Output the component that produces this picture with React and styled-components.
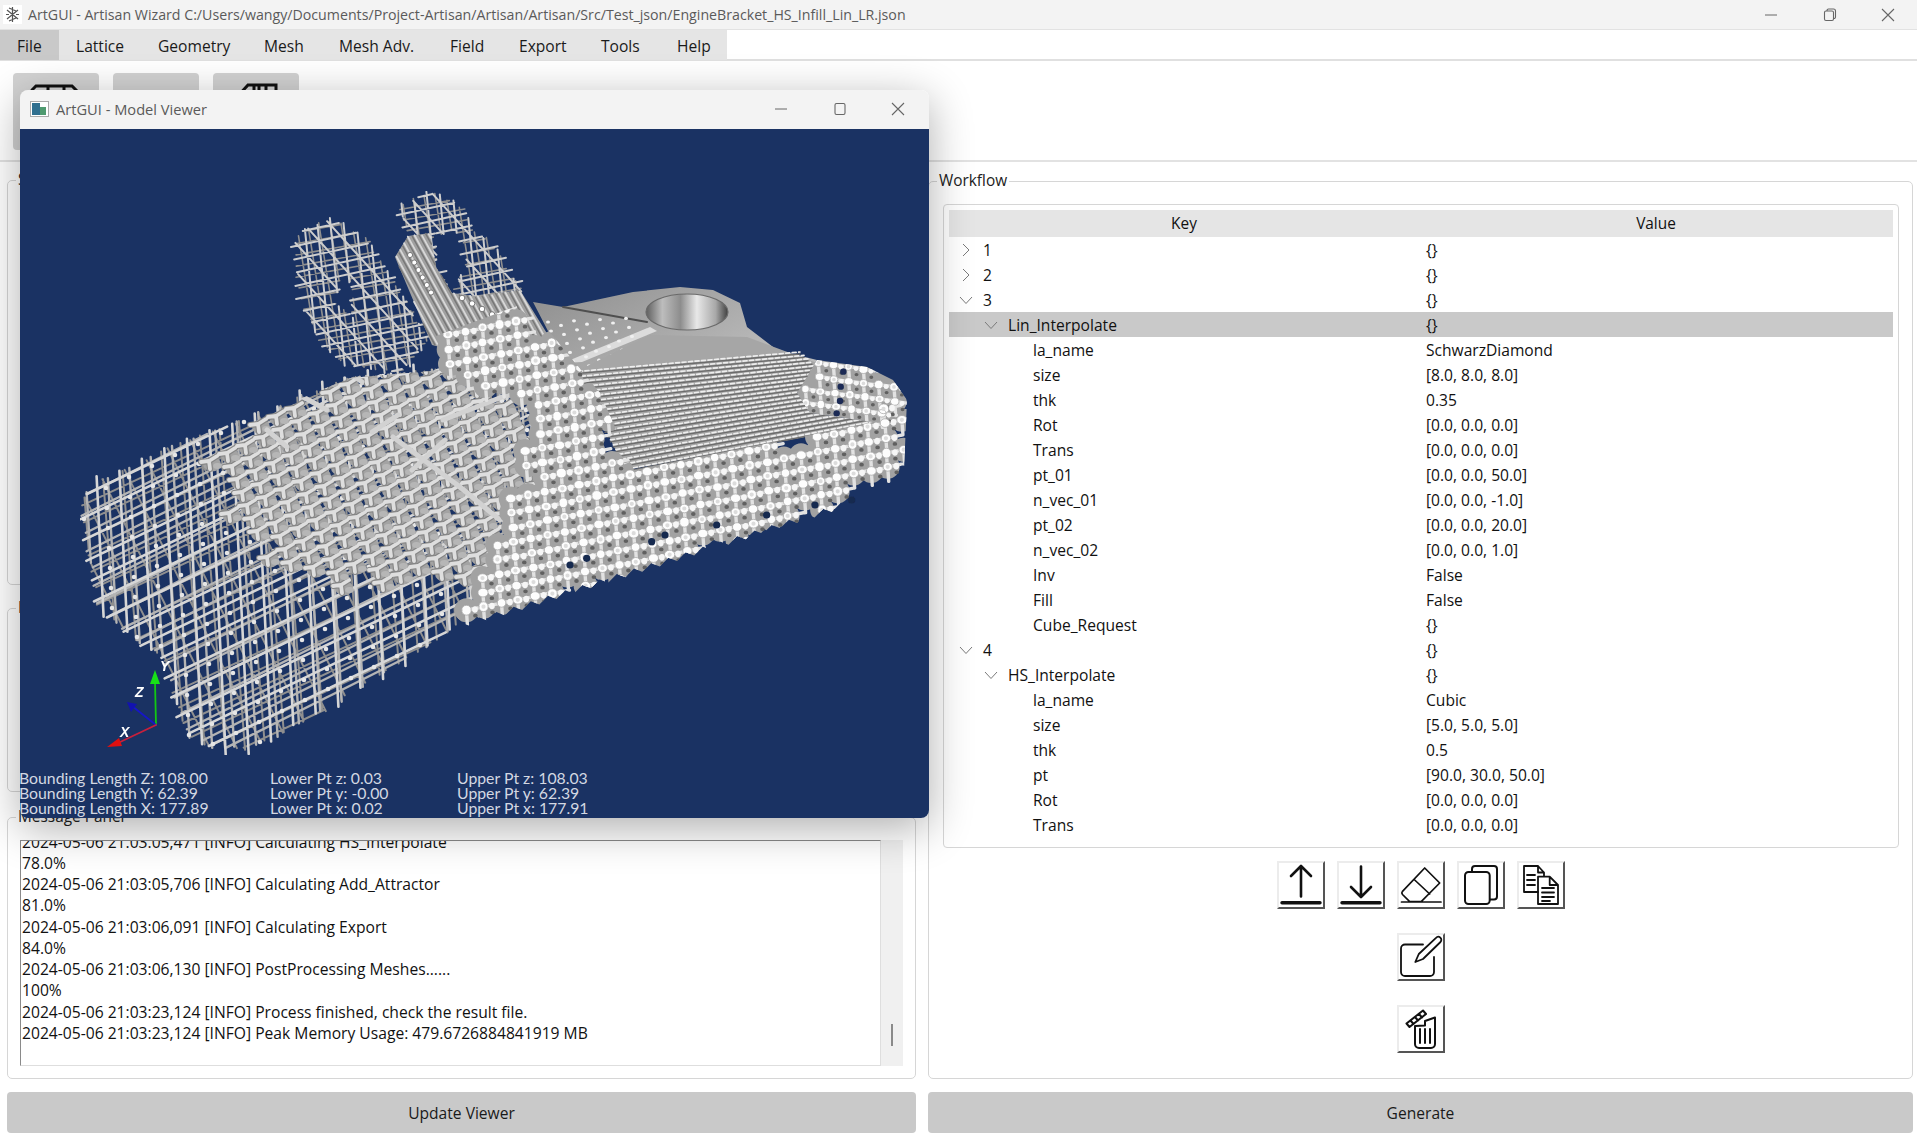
import React from "react";
import styled, { createGlobalStyle } from "styled-components";

const GlobalStyle = createGlobalStyle`
  html, body { margin: 0; padding: 0; background: #fff; overflow: hidden; }
  body { font-family: "Open Sans", "Noto Sans", "Liberation Sans", sans-serif; color: #111; }
  * { box-sizing: border-box; }
`;

const Page = styled.div`
  position: relative;
  width: 1917px;
  height: 1136px;
  display: flex;
  flex-direction: column;
  background: #fff;
  overflow: hidden;
`;

const TitleBar = styled.div`
  height: 30px;
  flex: none;
  display: flex;
  align-items: center;
  background: #f3f3f3;
  border-bottom: 1px solid #e2e2e2;
  padding-left: 3px;
  color: #5a5a5a;
  font-size: 14.2px;
`;

const AppIcon = styled.span`
  width: 19px;
  height: 19px;
  margin-right: 6px;
  background: #fff;
  display: flex;
  align-items: center;
  justify-content: center;
`;

const TitleText = styled.span`
  flex: 1;
  white-space: nowrap;
`;

const WinControls = styled.div`
  display: flex;
  align-items: center;
  width: ${(p) => p.$width}px;
  justify-content: space-between;
  margin-right: ${(p) => p.$right}px;
`;

const MenuRow = styled.div`
  height: 31px;
  flex: none;
  border-bottom: 2px solid #e0e0e0;
  display: flex;
`;

const MenuList = styled.div`
  display: flex;
  background: #e5e5e5;
  width: 727px;
  height: 30px;
`;

const MenuItem = styled.div`
  width: ${(p) => p.$w}px;
  padding: 1px 0 0 17px;
  display: flex;
  align-items: center;
  background: ${(p) => (p.$active ? "#c9c9c9" : "transparent")};
  font-size: 15.6px;
  color: #1a1a1a;
`;

const Toolbar = styled.div`
  height: 101px;
  flex: none;
  border-bottom: 2px solid #e2e2e2;
  padding: 12px 13px;
  display: flex;
  gap: 14px;
`;

const ToolButton = styled.div`
  width: 86px;
  height: 77px;
  background: #d2d2d2;
  border-radius: 4px;
  display: flex;
  justify-content: center;
  padding-top: 9px;
`;

const Workspace = styled.div`
  flex: none;
  height: 917px;
  padding: 0 4px 0 7px;
  display: grid;
  grid-template-columns: 909px 985px;
  column-gap: 12px;
`;

const Column = styled.div`
  display: flex;
  flex-direction: column;
  padding-top: ${(p) => p.$top}px;
`;

const Group = styled.fieldset`
  margin: 0 0 ${(p) => p.$after || 0}px 0;
  padding: 12px;
  min-width: 0;
  border: 1px solid #d6d6d6;
  border-radius: 5px;
  height: ${(p) => (p.$height ? `${p.$height}px` : "auto")};
  flex: ${(p) => (p.$height ? "none" : "1")};
  display: flex;
  flex-direction: column;
`;

const Legend = styled.legend`
  margin-left: -4px;
  padding: 0 2px;
  height: 22px;
  line-height: 22px;
  font-size: 15.4px;
  color: #222;
`;

const TextArea = styled.div`
  flex: 1;
  display: flex;
  min-height: 0;
`;

const LogBox = styled.div`
  flex: 1;
  overflow: hidden;
  border-top: 1px solid #8a8a8a;
  border-left: 1px solid #8a8a8a;
  border-right: 1px solid #dedede;
  border-bottom: 1px solid #dedede;
  padding-left: 1px;
  font-size: 15.65px;
  line-height: 21.25px;
  color: #111;
`;

const LogLines = styled.div`
  margin-top: -9.5px;
  white-space: nowrap;
`;

const LogTrack = styled.div`
  width: 22px;
  background: #f0f0f0;
  display: flex;
  flex-direction: column;
  align-items: center;
  justify-content: flex-end;
  padding-bottom: 20px;
`;

const LogThumb = styled.div`
  width: 2px;
  height: 22px;
  background: #8a8a8a;
`;

const InnerFrame = styled.div`
  border: 1px solid #d6d6d6;
  border-radius: 4px;
  padding: 5px;
  height: 644px;
  margin: 0 1px 0 2px;
`;

const TreeHead = styled.div`
  display: grid;
  grid-template-columns: 470px 1fr;
  height: 27px;
  background: #e5e5e5;
  font-size: 15.4px;
  line-height: 28px;
  text-align: center;
`;

const TreeRow = styled.div`
  display: grid;
  grid-template-columns: 470px 1fr;
  height: 25px;
  line-height: 26px;
  font-size: 15.6px;
  background: ${(p) => (p.$selected ? "#c9c9c9" : "transparent")};
`;

const KeyCell = styled.div`
  display: flex;
  align-items: center;
  padding-left: ${(p) => 8 + p.$level * 25}px;
`;

const ArrowSlot = styled.span`
  width: 26px;
  flex: none;
  display: flex;
  align-items: center;
`;

const ValueCell = styled.div`
  padding-left: 7px;
`;

const ActionArea = styled.div`
  display: flex;
  flex-direction: column;
  align-items: center;
  gap: 24px;
  margin-top: 13px;
`;

const ActionRow = styled.div`
  display: flex;
  gap: 12px;
`;

const IconButton = styled.div`
  width: 48px;
  height: 48px;
  background: #fff;
  border-top: 2px solid #ececec;
  border-left: 2px solid #ececec;
  border-right: 2px solid #555;
  border-bottom: 2px solid #555;
  svg {
    display: block;
    margin: -2px;
  }
`;

const BottomBar = styled.div`
  flex: none;
  margin-top: 13px;
  padding: 0 4px 0 7px;
  display: grid;
  grid-template-columns: 909px 985px;
  column-gap: 12px;
`;

const BigButton = styled.div`
  height: 41px;
  padding-top: 1px;
  background: #c9c9c9;
  border-radius: 4px;
  display: flex;
  align-items: center;
  justify-content: center;
  font-size: 15.6px;
  color: #1a1a1a;
`;

const ViewerWindow = styled.div`
  position: absolute;
  left: 20px;
  top: 90px;
  width: 909px;
  height: 728px;
  border-radius: 8px;
  overflow: hidden;
  display: flex;
  flex-direction: column;
`;

const ViewerShadow = styled.div`
  position: absolute;
  left: 20px;
  top: 90px;
  width: 909px;
  height: 728px;
  border-radius: 8px;
  box-shadow: 0 10px 44px rgba(0, 0, 0, 0.32);
`;

const ViewerTitle = styled.div`
  height: 39px;
  flex: none;
  background: #f3f3f3;
  display: flex;
  align-items: center;
  padding: 0 0 2px 10px;
  font-size: 14.65px;
  color: #5a5a5a;
`;

const ViewerLogo = styled.svg`
  margin-right: 7px;
`;

const Canvas = styled.div`
  position: relative;
  flex: 1;
  background: #1a3263;
`;

const Readouts = styled.div`
  position: absolute;
  left: -1px;
  bottom: 3px;
  display: flex;
  font-family: "Lato", "Open Sans", sans-serif;
  font-size: 15.8px;
  line-height: 15px;
  color: #d3d8e2;
`;

const ReadoutCol = styled.div`
  width: ${(p) => p.$w}px;
  white-space: nowrap;
`;

// ---- lattice model, generated once ----

let seed = 12345;
const rnd = () => {
  seed = (seed * 1664525 + 1013904223) % 4294967296;
  return seed / 4294967296;
};

const inPoly = ([x, y], pts) => {
  let c = false;
  for (let i = 0, j = pts.length - 1; i < pts.length; j = i++) {
    const [xi, yi] = pts[i];
    const [xj, yj] = pts[j];
    if (yi > y !== yj > y && x < ((xj - xi) * (y - yi)) / (yj - yi) + xi) c = !c;
  }
  return c;
};

const fmt = (n) => n.toFixed(1);
const poly = (pts) => pts.map((p) => p.join(",")).join(" ");
const dot = (x, y, r, ry = r) =>
  `M${fmt(x - r)} ${fmt(y)}a${fmt(r)} ${fmt(ry)} 0 1 0 ${fmt(2 * r)} 0a${fmt(r)} ${fmt(ry)} 0 1 0 ${fmt(-2 * r)} 0`;

// parallel lines inside a polygon, ends run past the edge a little so they read as spikes
const family = (dx, dy, spacing, offset, area, hole, stub) => {
  const xs = area.map((p) => p[0]);
  const ys = area.map((p) => p[1]);
  const cx = (Math.min(...xs) + Math.max(...xs)) / 2;
  const cy = (Math.min(...ys) + Math.max(...ys)) / 2;
  const len = Math.hypot(dx, dy);
  const ux = dx / len;
  const uy = dy / len;
  const span = Math.hypot(Math.max(...xs) - Math.min(...xs), Math.max(...ys) - Math.min(...ys));
  let d = "";
  for (let o = -span / 2 - (offset % spacing); o < span / 2; o += spacing) {
    let start = null;
    let last = null;
    for (let t = -span / 2; t <= span / 2; t += 2) {
      const p = [cx - uy * o + ux * t, cy + ux * o + uy * t];
      const on = inPoly(p, area) && !(hole && inPoly(p, hole));
      if (on && !start) start = p;
      if (on) last = p;
      if ((!on || t + 2 > span / 2) && start) {
        const a = stub * rnd();
        const b = stub * rnd();
        d += `M${fmt(start[0] - ux * a)} ${fmt(start[1] - uy * a)}L${fmt(last[0] + ux * b)} ${fmt(last[1] + uy * b)}`;
        start = null;
      }
    }
  }
  return d;
};

const toothed = (from, to, step, depth) => {
  const out = [];
  const n = Math.round(Math.hypot(to[0] - from[0], to[1] - from[1]) / step);
  for (let i = 0; i <= n; i++) {
    const t = i / n;
    out.push([
      from[0] + (to[0] - from[0]) * t,
      from[1] + (to[1] - from[1]) * t + (i % 2 ? depth : 0),
    ]);
  }
  return out;
};

const WIRE = [[80, 503], [97, 483], [173, 447], [290, 403], [350, 378], [560, 360], [596, 567], [463, 621], [328, 708], [249, 748], [213, 747], [189, 735], [175, 700], [164, 656], [131, 635], [99, 606], [92, 567]];
const EAR1 = [[295, 240], [313, 225], [337, 222], [367, 240], [390, 277], [427, 340], [400, 372], [343, 363], [320, 340], [300, 297]];
const EAR1_HOLE = [[340, 277], [353, 280], [353, 317], [335, 305]];
const EAR2 = [[400, 208], [430, 193], [467, 210], [470, 230], [493, 243], [507, 270], [522, 290], [490, 320], [437, 280], [412, 240]];
const EAR2_HOLE = [[433, 233], [460, 230], [468, 267], [452, 293], [437, 267]];
const EAR2_BAND = [[395, 257], [408, 236], [430, 233], [436, 267], [452, 293], [475, 296], [520, 290], [548, 335], [500, 362], [432, 345]];
const BLOB = [[205, 455], [290, 403], [345, 372], [440, 345], [500, 395], [545, 430], [535, 520], [480, 575], [380, 580], [300, 585], [245, 530]];
const BOSS = [[533, 302], [563, 307], [633, 292], [680, 287], [713, 290], [740, 303], [747, 327], [777, 350], [817, 360], [797, 393], [810, 413], [880, 423], [625, 470], [590, 395], [563, 360]];
const STRIPES = [[575, 372], [650, 335], [747, 337], [817, 363], [797, 393], [810, 413], [880, 423], [625, 470], [590, 395]];
const WHITE = [
  [440, 345], [520, 305], [545, 335], [590, 392], [622, 470], [880, 421], [907, 400], [904, 470],
  [892, 487], [462, 623],
  [475, 590], [490, 540], [520, 480], [545, 420], [500, 395], [460, 380],
];
// what the bright cells may paint on: same outline, toothed lower edge, room on the left for the ragged join
const WHITE_CLIP = [
  [425, 340], [520, 305], [548, 330], [600, 393], [634, 470], [880, 421], [907, 400], [904, 470],
  ...toothed([892, 487], [462, 623], 9, 6),
  [440, 600], [470, 520], [500, 430], [470, 390], [430, 365],
];
const WHITE_TOP = [[797, 393], [817, 360], [867, 367], [893, 380], [907, 400], [880, 423], [810, 413]];
const EDGE_HOLES = [[210, 915], [260, 895], [455, 845], [495, 825], [650, 795], [800, 765], [945, 735], [1055, 720]];
const CORNER_HOLES = [[1030, 335], [1022, 380], [1020, 423], [1010, 460]];

const buildModel = () => {
  const wireBack =
    family(1, -0.47, 16, 6, WIRE, null, 3) + family(0.08, 1, 20, 9, WIRE, null, 3) + family(0.5, 1, 24, 4, WIRE, null, 2);
  const wireMid = family(1, -0.5, 17, 13, WIRE, null, 3) + family(0.06, 1, 22, 2, WIRE, null, 4);
  const wireFront = family(1, -0.48, 20, 0, WIRE, null, 6) + family(0.05, 1, 23, 15, WIRE, null, 9);
  const earBack =
    family(1, -0.18, 11, 8, EAR1, EAR1_HOLE, 3) +
    family(0.16, 1, 11, 2, EAR1, EAR1_HOLE, 3) +
    family(1, -0.18, 11, 2, EAR2, EAR2_HOLE, 3) +
    family(0.16, 1, 11, 6, EAR2, EAR2_HOLE, 3);
  const ear =
    family(1, -0.22, 13, 3, EAR1, EAR1_HOLE, 6) +
    family(0.1, 1, 13, 7, EAR1, EAR1_HOLE, 6) +
    family(1, 1.1, 19, 2, EAR1, EAR1_HOLE, 3) +
    family(1, -0.22, 13, 5, EAR2, EAR2_HOLE, 7) +
    family(0.1, 1, 13, 1, EAR2, EAR2_HOLE, 5) +
    family(1, 1.1, 19, 9, EAR2, EAR2_HOLE, 3);
  const bandDark = family(0.55, 1, 6.5, 1, EAR2_BAND, null, 0);
  const bandLight = family(0.55, 1, 6.5, 3.5, EAR2_BAND, null, 0);

  // bright joints along the wire part
  let nodes = "";
  for (let i = -30; i < 30; i++) {
    for (let j = -30; j < 30; j++) {
      const x = 300 + i * 23 + j * 1;
      const y = 600 + i * -11 + j * 20;
      if (inPoly([x, y], WIRE)) nodes += dot(x, y, 2.3);
    }
  }

  // gray Y shaped cells in the middle of the part, edge left ragged by the jitter on the test point
  let yBack = "";
  let yDark = "";
  let yLight = "";
  let discs = "";
  for (let i = -30; i < 30; i++) {
    for (let j = -30; j < 30; j++) {
      const x = 360 + i * 18 + j * 5;
      const y = 470 + i * -8 + j * 13;
      if (!inPoly([x + (rnd() - 0.5) * 22, y + (rnd() - 0.5) * 20], BLOB)) continue;
      const seg = `M${fmt(x - 8)} ${fmt(y + 1)}L${fmt(x)} ${fmt(y)}L${fmt(x + 8)} ${fmt(y - 5)}M${fmt(x)} ${fmt(y)}L${fmt(x + 1)} ${fmt(y + 8)}`;
      yBack += dot(x + 3, y + 3, 9, 7.5);
      yDark += seg;
      yLight += seg;
      discs += dot(x + 8.5, y + 5, 4.4, 3);
    }
  }

  // white cells with dark gaps on the bright faces
  let backing = "";
  let whiteCells = "";
  let rings = "";
  let whiteBits = "";
  let gaps = "";
  let stems = "";
  const cells = (area, ox, oy, ax, ay, bx, by, r, spread) => {
    for (let i = -40; i < 40; i++) {
      for (let j = -40; j < 40; j++) {
        const x = ox + i * ax + j * bx + (rnd() - 0.5) * 1.2;
        const y = oy + i * ay + j * by + (rnd() - 0.5) * 1.2;
        if (!inPoly([x + (rnd() - 0.5) * spread, y + (rnd() - 0.5) * spread], area)) continue;
        backing += dot(x, y, 12);
        whiteCells += dot(x, y, r * (0.85 + rnd() * 0.2), r * 0.85);
        if ((i + j) % 2 === 0) rings += dot(x, y, r * 0.42);
        whiteBits += dot(x + ax * 0.5, y + ay * 0.5 + 1, r * 0.55);
        gaps += dot(x + ax * 0.5 + bx * 0.5, y + ay * 0.5 + by * 0.5, r * 0.46, r * 0.38);
        stems += `M${fmt(x)} ${fmt(y)}L${fmt(x + ax)} ${fmt(y + ay)}M${fmt(x)} ${fmt(y)}L${fmt(x + bx)} ${fmt(y + by)}`;
      }
    }
  };
  cells(WHITE, 700, 490, 17, -3.4, 1, 14.5, 5, 26);
  cells(WHITE_TOP, 850, 395, 15, 2, 1, 14, 4.4, 0);

  let bandDots = "";
  for (let i = 0; i < 6; i++) bandDots += dot(410 + i * 4.2, 255 + i * 7.5, 2.6);
  for (let i = 0; i < 7; i++) bandDots += dot(462 + i * 10, 298 + i * 5.5, 2.8);

  let bossDots = "";
  for (let i = 0; i < 7; i++) {
    for (let j = 0; j < 6; j++) {
      const x = 548 + i * 13 + j * 3;
      const y = 322 + j * 9 - i * 0.6 + (i % 2) * 4;
      if (inPoly([x, y], BOSS)) bossDots += dot(x, y, 2, 1.6);
    }
  }

  // stripe lines on the top face
  let stripeDark = "";
  let stripeLight = "";
  for (let k = 0; k <= 20; k++) {
    const t = k / 20;
    const x1 = 572 + 55 * t;
    const y1 = 372 + 97 * t;
    const x2 = 800 + 80 * t;
    const y2 = 352 + 68 * t;
    stripeDark += `M${fmt(x1)} ${fmt(y1 + 2)}L${fmt(x2)} ${fmt(y2 + 2)}`;
    stripeLight += `M${fmt(x1)} ${fmt(y1)}L${fmt(x2)} ${fmt(y2)}`;
  }

  return { wireBack, wireMid, wireFront, nodes, earBack, ear, bandDark, bandLight, bandDots, yBack, yDark, yLight, discs, backing, whiteCells, rings, whiteBits, gaps, stems, bossDots, stripeDark, stripeLight };
};

const model = buildModel();

const RIBS = [
  [443, 420, 520, 390], [393, 437, 460, 487], [267, 430, 287, 447], [303, 397, 327, 410],
  [345, 370, 362, 382], [372, 432, 398, 415], [412, 470, 445, 440], [460, 487, 500, 520],
];

const ModelView = () => (
  <svg width="909" height="689" viewBox="20 129 909 689" style={{ display: "block" }}>
    <defs>
      <filter id="soft" x="0" y="0" width="100%" height="100%">
        <feGaussianBlur stdDeviation="0.65" />
      </filter>
      <clipPath id="bodyClip">
        <polygon points={poly(WIRE)} />
      </clipPath>
      <clipPath id="frontClip">
        <polygon points={poly(WHITE_CLIP)} />
        <polygon points={poly(WHITE_TOP)} />
      </clipPath>
      <linearGradient id="bossFill" x1="0" y1="0" x2="1" y2="1">
        <stop offset="0" stopColor="#8e8e8e" />
        <stop offset="0.45" stopColor="#b5b5b5" />
        <stop offset="1" stopColor="#c8c8c8" />
      </linearGradient>
      <linearGradient id="holeWall" x1="0" y1="0" x2="1" y2="0">
        <stop offset="0" stopColor="#5e5e5e" />
        <stop offset="0.2" stopColor="#bdbdbd" />
        <stop offset="0.42" stopColor="#8d8d8d" />
        <stop offset="0.62" stopColor="#e8e8e8" />
        <stop offset="0.85" stopColor="#a8a8a8" />
        <stop offset="1" stopColor="#3e3e3e" />
      </linearGradient>
    </defs>
    <g filter="url(#soft)" fill="none" strokeLinecap="round">
      <path d={model.wireBack} stroke="#8f8f8f" strokeWidth="2" />
      <path d={model.wireMid} stroke="#b4b4b4" strokeWidth="2.4" />
      <path d={model.wireFront} stroke="#d6d6d6" strokeWidth="2.6" />
      <path d={model.nodes} fill="#e6e6e6" />
      <path d={model.earBack} stroke="#8f8f8f" strokeWidth="1.6" />
      <path d={model.ear} stroke="#cdcdcd" strokeWidth="2" />

      <g clipPath="url(#bodyClip)">
        <path d={model.yBack} fill="#a3a3a3" />
        <path d={model.yDark} stroke="#858585" strokeWidth="6" />
        <path d={model.yLight} stroke="#dedede" strokeWidth="3.8" />
        <path d={model.discs} fill="#b6b6b6" />
        {RIBS.map((r, i) => (
          <line key={i} x1={r[0]} y1={r[1]} x2={r[2]} y2={r[3]} stroke="#d2d2d2" strokeWidth="5" />
        ))}
      </g>

      <polygon points={poly(BOSS)} fill="url(#bossFill)" strokeLinejoin="round" />
      <polygon points="563,363 650,327 657,331 582,362" fill="#dcdcdc" />
      <line x1="563" y1="307" x2="647" y2="322" stroke="#4f4f4f" strokeWidth="2" />
      <path d={model.bossDots} fill="#f0f0f0" />
      <polygon points={poly(STRIPES)} fill="#a6a6a6" />
      <path d={model.stripeDark} stroke="#6c6c6c" strokeWidth="1.4" />
      <path d={model.stripeLight} stroke="#eeeeee" strokeWidth="1.7" strokeDasharray="4 2.5" />
      <ellipse cx="687" cy="312" rx="41" ry="18" fill="url(#holeWall)" stroke="#6a6a6a" strokeWidth="1.2" />

      <polygon points={poly(EAR2_BAND)} fill="#a0a0a0" />
      <path d={model.bandDark} stroke="#777" strokeWidth="1.4" />
      <path d={model.bandLight} stroke="#d8d8d8" strokeWidth="1.8" />
      <path d={model.bandDots} fill="#fff" stroke="#777" strokeWidth="1" />

      <g clipPath="url(#frontClip)">
        <path d={model.backing} fill="#a2a2a2" />
        <path d={model.stems} stroke="#e2e2e2" strokeWidth="3.4" />
        <path d={model.gaps} fill="#606060" />
        <path d={model.whiteCells} fill="#fdfdfd" stroke="#a4a4a4" strokeWidth="0.7" />
        <path d={model.rings} fill="#dcdcdc" />
        <path d={model.whiteBits} fill="#f6f6f6" />
      </g>
      {EDGE_HOLES.map((h, i) => (
        <circle key={i} cx={500 + h[0] / 3} cy={260 + h[1] / 3} r="3.6" fill="#16294f" />
      ))}
      {CORNER_HOLES.map((h, i) => (
        <circle key={i} cx={500 + h[0] / 3} cy={260 + h[1] / 3} r="3.2" fill="#1a2c55" />
      ))}
    </g>

    <g strokeLinecap="round">
      <line x1="156" y1="725" x2="155" y2="682" stroke="#12c812" strokeWidth="1.8" />
      <polygon points="155,670 150,684 160,684" fill="#18e018" />
      <line x1="156" y1="725" x2="132" y2="706" stroke="#1616c8" strokeWidth="1.8" />
      <polygon points="127,702 137,704 131,712" fill="#1212b0" />
      <line x1="156" y1="725" x2="118" y2="743" stroke="#c8203c" strokeWidth="1.8" />
      <polygon points="107,747 119,738 122,746" fill="#e01010" />
    </g>
    <g fontFamily="Liberation Sans, sans-serif" fontStyle="italic" fontWeight="700" fontSize="14" fill="#fff">
      <text x="160" y="671">Y</text>
      <text x="135" y="697">Z</text>
      <text x="120" y="737">X</text>
    </g>
  </svg>
);

// ---- icons ----

const Minimize = () => (
  <svg width="14" height="14" viewBox="0 0 14 14" fill="none" stroke="#666" strokeWidth="1">
    <path d="M1 7h12" />
  </svg>
);
const Maximize = () => (
  <svg width="14" height="14" viewBox="0 0 14 14" fill="none" stroke="#666" strokeWidth="1.1">
    <rect x="2" y="1.5" width="10" height="11" rx="1.5" />
  </svg>
);
const Restore = () => (
  <svg width="14" height="14" viewBox="0 0 14 14" fill="none" stroke="#666" strokeWidth="1.1">
    <rect x="1.5" y="3" width="9" height="9.5" rx="1.5" />
    <path d="M4 3V2.5A1.5 1.5 0 0 1 5.5 1h5A2 2 0 0 1 12.5 3v6a1.5 1.5 0 0 1-2 1.4" />
  </svg>
);
const Close = () => (
  <svg width="14" height="14" viewBox="0 0 14 14" fill="none" stroke="#666" strokeWidth="1.1">
    <path d="M1 1l12 12M13 1L1 13" />
  </svg>
);

const Chevron = ({ open }) => (
  <svg width="18" height="14" viewBox="0 0 18 14" fill="none" stroke="#7a7a7a" strokeWidth="1">
    {open ? <path d="M3 4l6 6.5L15 4" /> : <path d="M6 1l6 6-6 6" />}
  </svg>
);

const AppGlyph = () => (
  <svg width="15" height="17" viewBox="0 0 15 17" fill="none" stroke="#555" strokeWidth="1.2">
    <path d="M7.5 1v15M2 4l11 9M13 4L2 13M4 2l7 3M4 15l7-3M1 8.5h3M11 8.5h3" />
  </svg>
);

const ViewerGlyph = () => (
  <ViewerLogo width="19" height="16" viewBox="0 0 19 16">
    <rect x="0.5" y="0.5" width="18" height="15" fill="#fff" stroke="#aaa" />
    <rect x="2" y="2" width="8" height="12" fill="#2f6f8f" />
    <rect x="10" y="6" width="6" height="8" fill="#4f9a6f" />
  </ViewerLogo>
);

const ToolIcon1 = () => (
  <svg width="52" height="40" viewBox="0 0 52 40" fill="none" stroke="#111" strokeWidth="3">
    <path d="M6 4h36l8 8v26H2V8z" />
    <path d="M2 12h48M18 4v8M34 4v8" />
  </svg>
);
const ToolIcon2 = () => (
  <svg width="52" height="40" viewBox="0 0 52 40" fill="none" stroke="#111" strokeWidth="3">
    <path d="M17 15a9 5 0 0 1 18 0" />
  </svg>
);
const ToolIcon3 = () => (
  <svg width="44" height="40" viewBox="0 0 44 40" fill="none" stroke="#111" strokeWidth="3">
    <path d="M2 16L14 3h28v36H2z" />
    <path d="M20 3v14h5V3M32 3v14" />
  </svg>
);

const ActionIcon = ({ children, width = 2 }) => (
  <svg width="48" height="48" viewBox="0 0 48 48" fill="none" stroke="#111" strokeWidth={width} strokeLinecap="round" strokeLinejoin="round">
    {children}
  </svg>
);

const UpIcon = () => (
  <ActionIcon width={2.6}>
    <path d="M24 5.5V35.5M14 15l10-10 10 10" />
    <path d="M5 41.8H43" strokeWidth="3.4" />
  </ActionIcon>
);
const DownIcon = () => (
  <ActionIcon width={2.6}>
    <path d="M24 5.5V35.5M14 26l10 10 10-10" />
    <path d="M5 41.8H43" strokeWidth="3.4" />
  </ActionIcon>
);
const EraserIcon = () => (
  <ActionIcon width={1.7}>
    <path d="M27.7 7l15 15-18.5 18.7H12.7L5.5 33.5a2.5 2.5 0 0 1 0-3.2zM17.7 19l15 14M4.5 41H44" />
  </ActionIcon>
);
const CopyIcon = () => (
  <ActionIcon>
    <rect x="8" y="11" width="24.7" height="32" rx="3.5" />
    <path d="M15 10.5V8a3 3 0 0 1 3-3h19a3 3 0 0 1 3 3v27.5a3 3 0 0 1-3 3h-4" />
  </ActionIcon>
);
const PasteIcon = () => (
  <ActionIcon width={1.8}>
    <path d="M21 31H7V5h14l6 6.5V15M21 5v6.5h6" />
    <path d="M21 15.7h11.7L41 24v19H21zM32.7 15.7V24H41" />
    <path d="M10 14h8M10 19h8M10 24h8M25 27h12M25 31.5h12M25 36h12M25 40h8" />
  </ActionIcon>
);
const EditIcon = () => (
  <ActionIcon width={1.8}>
    <path d="M26 11.5H8a4 4 0 0 0-4 4V39a4 4 0 0 0 4 4h25a4 4 0 0 0 4-4V24" />
    <path d="M18.3 29l3.5-8L39 4.8a3 3 0 0 1 4.5 4.2L26 26z" />
  </ActionIcon>
);
const TrashIcon = () => (
  <ActionIcon>
    <path d="M9.5 18.5L26 5.5l3 3.5L12.5 22zM13.5 15.5l3 3.5M18 12l3 3.5M22 9l3 3.5" />
    <path d="M18 21v18a4 4 0 0 0 4 4h12a4 4 0 0 0 4-4V12.5L28 16v4.5z" />
    <path d="M23 24v14M28 24v14M33 24v14" />
  </ActionIcon>
);

// ---- data ----

const MENU = [
  ["File", 59], ["Lattice", 82], ["Geometry", 106], ["Mesh", 75], ["Mesh Adv.", 111],
  ["Field", 69], ["Export", 82], ["Tools", 76], ["Help", 67],
];

const TREE = [
  { k: "1", v: "{}", l: 0, a: "closed" },
  { k: "2", v: "{}", l: 0, a: "closed" },
  { k: "3", v: "{}", l: 0, a: "open" },
  { k: "Lin_Interpolate", v: "{}", l: 1, a: "open", s: true },
  { k: "la_name", v: "SchwarzDiamond", l: 2 },
  { k: "size", v: "[8.0, 8.0, 8.0]", l: 2 },
  { k: "thk", v: "0.35", l: 2 },
  { k: "Rot", v: "[0.0, 0.0, 0.0]", l: 2 },
  { k: "Trans", v: "[0.0, 0.0, 0.0]", l: 2 },
  { k: "pt_01", v: "[0.0, 0.0, 50.0]", l: 2 },
  { k: "n_vec_01", v: "[0.0, 0.0, -1.0]", l: 2 },
  { k: "pt_02", v: "[0.0, 0.0, 20.0]", l: 2 },
  { k: "n_vec_02", v: "[0.0, 0.0, 1.0]", l: 2 },
  { k: "Inv", v: "False", l: 2 },
  { k: "Fill", v: "False", l: 2 },
  { k: "Cube_Request", v: "{}", l: 2 },
  { k: "4", v: "{}", l: 0, a: "open" },
  { k: "HS_Interpolate", v: "{}", l: 1, a: "open" },
  { k: "la_name", v: "Cubic", l: 2 },
  { k: "size", v: "[5.0, 5.0, 5.0]", l: 2 },
  { k: "thk", v: "0.5", l: 2 },
  { k: "pt", v: "[90.0, 30.0, 50.0]", l: 2 },
  { k: "Rot", v: "[0.0, 0.0, 0.0]", l: 2 },
  { k: "Trans", v: "[0.0, 0.0, 0.0]", l: 2 },
];

const LOG = [
  "2024-05-06 21:03:05,471 [INFO] Calculating HS_Interpolate",
  "78.0%",
  "2024-05-06 21:03:05,706 [INFO] Calculating Add_Attractor",
  "81.0%",
  "2024-05-06 21:03:06,091 [INFO] Calculating Export",
  "84.0%",
  "2024-05-06 21:03:06,130 [INFO] PostProcessing Meshes......",
  "100%",
  "2024-05-06 21:03:23,124 [INFO] Process finished, check the result file.",
  "2024-05-06 21:03:23,124 [INFO] Peak Memory Usage: 479.6726884841919 MB",
];

const READOUTS = [
  [251, ["Bounding Length Z: 108.00", "Bounding Length Y: 62.39", "Bounding Length X: 177.89"]],
  [187, ["Lower Pt z: 0.03", "Lower Pt y: -0.00", "Lower Pt x: 0.02"]],
  [200, ["Upper Pt z: 108.03", "Upper Pt y: 62.39", "Upper Pt x: 177.91"]],
];

export default function App() {
  return (
    <Page>
      <GlobalStyle />
      <TitleBar>
        <AppIcon>
          <AppGlyph />
        </AppIcon>
        <TitleText>ArtGUI - Artisan Wizard C:/Users/wangy/Documents/Project-Artisan/Artisan/Artisan/Src/Test_json/EngineBracket_HS_Infill_Lin_LR.json</TitleText>
        <WinControls $width={131} $right={22}>
          <Minimize />
          <Restore />
          <Close />
        </WinControls>
      </TitleBar>

      <MenuRow>
        <MenuList>
          {MENU.map(([label, w], i) => (
            <MenuItem key={label} $w={w} $active={i === 0}>
              {label}
            </MenuItem>
          ))}
        </MenuList>
      </MenuRow>

      <Toolbar>
        <ToolButton>
          <ToolIcon1 />
        </ToolButton>
        <ToolButton>
          <ToolIcon2 />
        </ToolButton>
        <ToolButton>
          <ToolIcon3 />
        </ToolButton>
      </Toolbar>

      <Workspace>
        <Column $top={7}>
          <Group $height={416} $after={12}>
            <Legend>Settings</Legend>
          </Group>
          <Group $height={195} $after={14}>
            <Legend>Parameters</Legend>
          </Group>
          <Group>
            <Legend>Message Panel</Legend>
            <TextArea>
              <LogBox>
                <LogLines>
                  {LOG.map((line, i) => (
                    <div key={i}>{line}</div>
                  ))}
                </LogLines>
              </LogBox>
              <LogTrack>
                <LogThumb />
              </LogTrack>
            </TextArea>
          </Group>
        </Column>

        <Column $top={8}>
          <Group>
            <Legend>Workflow</Legend>
            <InnerFrame>
              <TreeHead>
                <div>Key</div>
                <div>Value</div>
              </TreeHead>
              {TREE.map((row, i) => (
                <TreeRow key={i} $selected={row.s}>
                  <KeyCell $level={row.l}>
                    <ArrowSlot>{row.a && <Chevron open={row.a === "open"} />}</ArrowSlot>
                    {row.k}
                  </KeyCell>
                  <ValueCell>{row.v}</ValueCell>
                </TreeRow>
              ))}
            </InnerFrame>
            <ActionArea>
              <ActionRow>
                <IconButton><UpIcon /></IconButton>
                <IconButton><DownIcon /></IconButton>
                <IconButton><EraserIcon /></IconButton>
                <IconButton><CopyIcon /></IconButton>
                <IconButton><PasteIcon /></IconButton>
              </ActionRow>
              <ActionRow>
                <IconButton><EditIcon /></IconButton>
              </ActionRow>
              <ActionRow>
                <IconButton><TrashIcon /></IconButton>
              </ActionRow>
            </ActionArea>
          </Group>
        </Column>
      </Workspace>

      <BottomBar>
        <BigButton>Update Viewer</BigButton>
        <BigButton>Generate</BigButton>
      </BottomBar>

      <ViewerShadow />
      <ViewerWindow>
        <ViewerTitle>
          <ViewerGlyph />
          <TitleText>ArtGUI - Model Viewer</TitleText>
          <WinControls $width={131} $right={24}>
            <Minimize />
            <Maximize />
            <Close />
          </WinControls>
        </ViewerTitle>
        <Canvas>
          <ModelView />
          <Readouts>
            {READOUTS.map(([w, lines]) => (
              <ReadoutCol key={w} $w={w}>
                {lines.map((t) => (
                  <div key={t}>{t}</div>
                ))}
              </ReadoutCol>
            ))}
          </Readouts>
        </Canvas>
      </ViewerWindow>
    </Page>
  );
}
